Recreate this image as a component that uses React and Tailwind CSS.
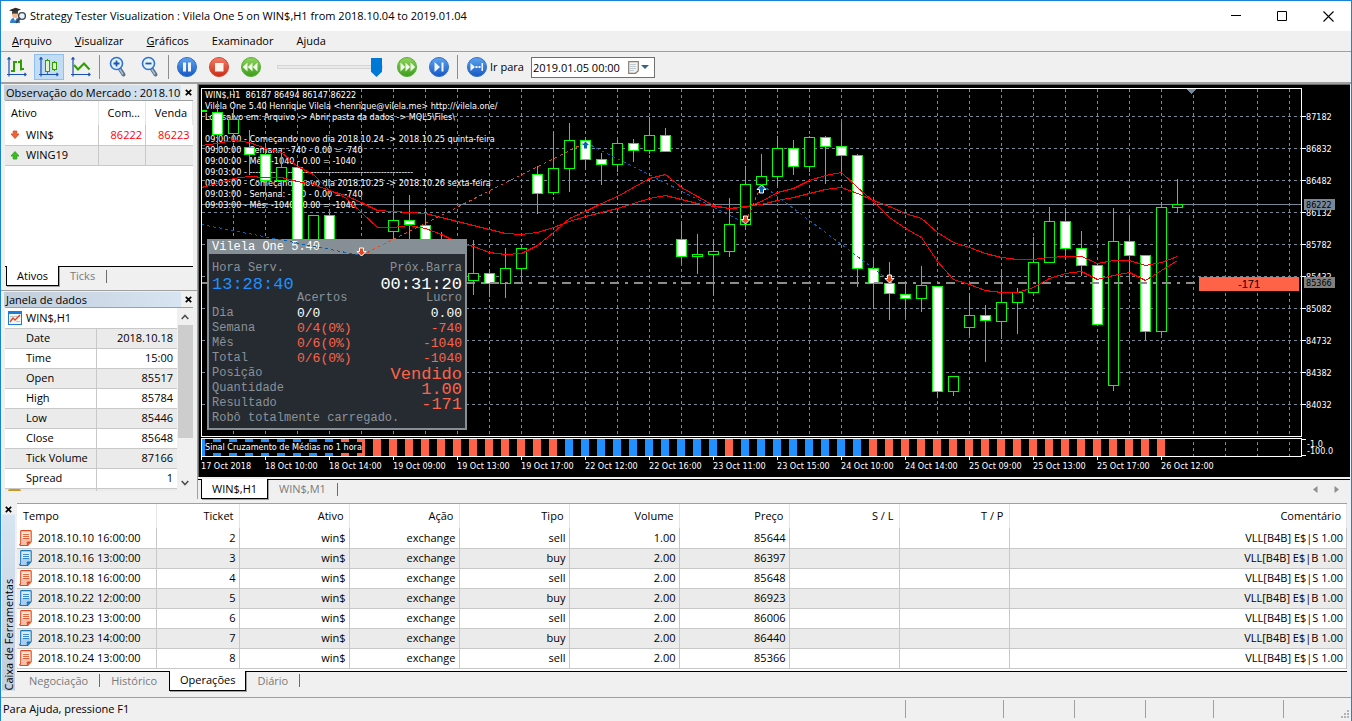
import React from "react";

/* ---------- chart data: x, high, open/close top, bottom, low, filled ---------- */
const CANDLES = [
  [217, 101, 112, 134, 152, 1], [233, 108, 119, 133, 139, 0], [249, 130, 147, 154, 174, 1],
  [265, 144, 154, 180, 194, 1], [281, 153, 167, 180, 193, 0], [297, 161, 167, 290, 295, 1],
  [313, 215, 215, 290, 295, 0], [329, 213, 215, 290, 295, 1], [393, 196, 220, 231, 250, 0],
  [409, 195, 220, 224, 250, 1], [425, 208, 225, 270, 275, 1], [441, 232, 270, 280, 285, 1],
  [473, 240, 273, 280, 294, 0], [489, 270, 273, 283, 296, 1], [505, 248, 268, 283, 297, 0],
  [521, 248, 248, 268, 282, 0], [537, 166, 174, 193, 213, 1], [553, 132, 168, 192, 194, 0],
  [569, 123, 140, 168, 191, 0], [585, 137, 140, 159, 169, 1], [601, 153, 159, 164, 184, 1],
  [617, 140, 143, 164, 171, 0], [633, 139, 143, 150, 161, 1], [649, 117, 135, 150, 153, 0],
  [665, 128, 135, 151, 151, 1], [681, 222, 239, 256, 263, 1], [697, 234, 254, 256, 273, 0],
  [713, 239, 251, 254, 295, 0], [729, 198, 224, 251, 256, 0], [745, 166, 184, 224, 229, 0],
  [761, 154, 176, 184, 186, 0], [777, 136, 148, 176, 185, 0], [793, 140, 148, 166, 174, 1],
  [809, 136, 137, 166, 171, 0], [825, 136, 137, 146, 183, 1], [841, 122, 146, 155, 172, 1],
  [857, 154, 155, 268, 286, 1], [873, 259, 268, 283, 308, 1], [889, 262, 283, 293, 319, 1],
  [905, 283, 294, 298, 316, 1], [921, 266, 285, 298, 311, 0], [937, 286, 286, 391, 397, 1],
  [953, 376, 376, 391, 395, 0], [969, 293, 315, 327, 334, 0], [985, 305, 315, 320, 361, 1],
  [1001, 270, 302, 321, 338, 0], [1017, 288, 292, 302, 333, 0], [1033, 237, 262, 292, 292, 0],
  [1049, 207, 221, 262, 262, 0], [1065, 208, 221, 248, 256, 1], [1081, 231, 248, 265, 275, 1],
  [1097, 263, 265, 324, 324, 1], [1113, 208, 241, 385, 390, 0], [1129, 218, 241, 255, 282, 1],
  [1145, 255, 255, 331, 339, 1], [1161, 202, 207, 331, 334, 0], [1177, 179, 204, 207, 212, 0],
];

const FAST = [
  145, 143, 140, 142, 148, 152, 166, 174, 190, 197, 212, 227, 227, 225, 228, 234, 242, 246, 252, 254,
  253, 245, 232, 218, 211, 203, 196, 187, 178, 174, 187, 196, 205, 208, 207, 201, 192, 188, 180, 175,
  172, 187, 201, 217, 228, 237, 261, 279, 284, 290, 292, 292, 287, 278, 273, 271, 279, 275, 272, 280,
  270, 260,
];
const SLOW = [
  187, 183, 178, 176, 177, 177, 181, 184, 190, 195, 202, 210, 211, 212, 213, 217, 221, 225, 229, 233,
  234, 232, 227, 221, 216, 212, 208, 203, 198, 195, 199, 203, 206, 208, 206, 204, 200, 197, 193, 189,
  187, 193, 200, 206, 213, 218, 232, 242, 247, 253, 257, 259, 259, 257, 256, 256, 263, 260, 260, 265,
  262, 256,
];
const toPoints = (ys) => ys.map((y, i) => `${201 + i * 16},${y}`).join(" ");

const GRID_X = Array.from({ length: 40 }, (_, i) => 233 + i * 32);
const PRICES = [87182, 86832, 86482, 86132, 85782, 85432, 85082, 84732, 84382, 84032];
const TIMES = [
  "17 Oct 2018", "18 Oct 10:00", "18 Oct 14:00", "19 Oct 09:00", "19 Oct 13:00", "19 Oct 17:00",
  "22 Oct 12:00", "22 Oct 16:00", "23 Oct 11:00", "23 Oct 15:00", "24 Oct 10:00", "24 Oct 14:00",
  "25 Oct 09:00", "25 Oct 13:00", "25 Oct 17:00", "26 Oct 12:00",
];
const LOG = [
  "WIN$,H1  86187 86494 86147 86222",
  "Vilela One 5.40 Henrique Vilela <henrique@vilela.me> http://vilela.one/",
  "Log salvo em: Arquivo -> Abrir pasta da dados -> MQL5\\Files\\",
  "",
  "09:00:00 - Começando novo dia 2018.10.24 -> 2018.10.25 quinta-feira",
  "09:00:00 - Semana: -740 - 0.00 = -740",
  "09:00:00 - Mês: -1040 - 0.00 = -1040",
  "09:03:00 - --------------------------------------------------------",
  "09:03:00 - Começando novo dia 2018.10.25 -> 2018.10.26 sexta-feira",
  "09:03:00 - Semana: -740 - 0.00 = -740",
  "09:03:00 - Mês: -1040 - 0.00 = -1040",
];

const OPERATIONS = [
  ["2018.10.10 16:00:00", 2, "sell", "1.00", 85644],
  ["2018.10.16 13:00:00", 3, "buy", "2.00", 86397],
  ["2018.10.18 16:00:00", 4, "sell", "2.00", 85648],
  ["2018.10.22 12:00:00", 5, "buy", "2.00", 86923],
  ["2018.10.23 13:00:00", 6, "sell", "2.00", 86006],
  ["2018.10.23 14:00:00", 7, "buy", "2.00", 86440],
  ["2018.10.24 13:00:00", 8, "sell", "2.00", 85366],
];
const DATA_WINDOW = [
  ["Date", "2018.10.18"], ["Time", "15:00"], ["Open", "85517"], ["High", "85784"], ["Low", "85446"],
  ["Close", "85648"], ["Tick Volume", "87166"], ["Spread", "1"],
];

/* ---------- icons ---------- */
function AppIcon() {
  return (
    <svg width="18" height="18" viewBox="0 0 18 18" aria-hidden="true">
      <path d="M1 16c0-3 2-5.500 5-5.500s5 2 5 5.500z" fill="#2f7fd0" />
      <path d="M4.500 10.800 6 14l2-3.200z" fill="#fff" />
      <ellipse cx="6" cy="7.600" rx="3" ry="3.400" fill="#f2b98a" />
      <path d="M3 7.500c0-1 .3-2 1-2.600h4c.6.600 1 1.600 1 2.600l-1-1.200H4z" fill="#6b4020" />
      <path d="M0 3.200 6.500.8 12 2.600 6 5.200z" fill="#2b2b2b" />
      <path d="M3 4.200v1.700c1.800.9 4.400.8 6 0V4z" fill="#3c3c3c" />
      <circle cx="13" cy="9" r="3.400" fill="#e8f3fb" stroke="#3d4650" strokeWidth="1.400" />
      <path d="m10.600 11.500-3 3.600" stroke="#3d4650" strokeWidth="2.200" strokeLinecap="round" />
    </svg>
  );
}

function Axes() {
  return (
    <path d="M2 .5v19M0 17.500h19M.5 2.500 2 .5l1.500 2M17.500 16l1.500 1.500-1.500 1.500" fill="none" stroke="#1a4fb4" strokeWidth="1.200" />
  );
}
function BarsIcon() {
  return (
    <svg width="20" height="20" viewBox="0 0 20 20" aria-hidden="true">
      <Axes />
      <path d="M7 4v11M4 14h3M7 5h3M14 2.500v11M11 5h3M14 12h3" fill="none" stroke="#2e9e00" strokeWidth="2" />
    </svg>
  );
}
function CandlesIcon() {
  return (
    <svg width="20" height="20" viewBox="0 0 20 20" aria-hidden="true">
      <Axes />
      <path d="M8.500 2v2M8.500 15v2M15.500 4v2M15.500 12v2" stroke="#2e9e00" />
      <rect x="6.500" y="3.500" width="4" height="11" fill="#e3f5c8" stroke="#2e9e00" />
      <rect x="13.500" y="5.500" width="4" height="7" fill="#e3f5c8" stroke="#2e9e00" />
    </svg>
  );
}
function LineIcon() {
  return (
    <svg width="20" height="20" viewBox="0 0 20 20" aria-hidden="true">
      <Axes />
      <path d="m3 8 4 4.500 6-6 5.500 6" fill="none" stroke="#2e9e00" strokeWidth="2" />
    </svg>
  );
}
function Magnifier({ plus }) {
  return (
    <svg width="20" height="22" viewBox="0 0 20 22" aria-hidden="true">
      <path d="m11.500 12.500 4 6" stroke="#5c6f86" strokeWidth="4" strokeLinecap="round" />
      <path d="m11.800 13.500 3 4.500" stroke="#a9bfd6" strokeWidth="1.500" strokeLinecap="round" />
      <circle cx="8.500" cy="7.500" r="6" fill="#e6f3fd" stroke="#2f74cf" strokeWidth="1.600" />
      <path d={plus ? "M5.500 7.500h6M8.500 4.500v6" : "M5.500 7.500h6"} stroke="#1b56b5" strokeWidth="1.800" />
    </svg>
  );
}
function Orb({ from, to, edge, id, children }) {
  return (
    <svg width="20" height="20" viewBox="0 0 20 20" aria-hidden="true">
      <defs>
        <linearGradient id={id} x1="0" y1="0" x2="0" y2="1">
          <stop offset="0" stopColor={from} />
          <stop offset="1" stopColor={to} />
        </linearGradient>
      </defs>
      <circle cx="10" cy="10" r="9.500" fill={`url(#${id})`} stroke={edge} />
      {children}
    </svg>
  );
}
const BLUE = { from: "#5fa3ee", to: "#1558c4", edge: "#2f6fcb" };
const RED = { from: "#f0806a", to: "#cc2a14", edge: "#d4442e" };
const GREEN = { from: "#8fd45c", to: "#3c9d1c", edge: "#58ae34" };

function WindowGlyph() {
  return (
    <svg width="14" height="14" viewBox="0 0 14 14" aria-hidden="true">
      <rect x=".5" y=".5" width="13" height="13" fill="#f4f4f4" stroke="#1c7cd6" />
      <path d="M0 0h14v3H0z" fill="#1c7cd6" />
      <path d="M2 5.500h10M2 8h2M8 10.500h4" stroke="#c4c4c4" />
      <path d="m2 11 3-4 2 2 5-5" fill="none" stroke="#e2401b" strokeWidth="1.300" />
    </svg>
  );
}
function NoteIcon({ side }) {
  const c = side === "sell" ? ["#e04a1c", "#fde3d8", "#f8bfa9"] : ["#1874b8", "#dcebf9", "#aacdf0"];
  return (
    <svg width="13" height="16" viewBox="0 0 13 16" aria-hidden="true">
      <path d="M2.500.6h8.900q.8 0 .8.800v10.200l-3.400 3.800H1.500q-.8 0-.8-.8l1-1V1.400q0-.8.800-.8z" fill={c[1]} stroke={c[0]} strokeWidth="1.100" />
      <path d="M2.300 8h9.300v3.500L8.500 15H2.300z" fill={c[2]} />
      <path d="M4 4.500h6M4 6.500h6M4 8.500h6" stroke={c[0]} strokeWidth=".8" />
      <path d="M7.800 15.400v-3.200q0-.8.800-.8h3.600z" fill={c[0]} />
    </svg>
  );
}
function Arrow({ up }) {
  return (
    <svg width="10" height="9" viewBox="0 0 10 9" aria-hidden="true">
      {up ? (
        <path d="M5 .5 9 5H6.800v3H3.200V5H1z" fill="#35c21c" stroke="#2a9a18" strokeWidth=".8" />
      ) : (
        <path d="M5 8.500 9 4H6.800V1H3.200v3H1z" fill="#f0643c" stroke="#d9431c" strokeWidth=".8" />
      )}
    </svg>
  );
}
function CloseX() {
  return (
    <svg width="7" height="7" viewBox="0 0 7 7" aria-hidden="true">
      <path d="m.8.800 5.400 5.400M6.200.8.800 6.200" stroke="#000" strokeWidth="1.700" />
    </svg>
  );
}

/* ---------- shared pieces ---------- */
function Tabs({ tabs, active, className = "" }) {
  return (
    <div role="tablist" className={`flex h-5 items-start border-t border-black ${className}`}>
      {tabs.map((t, i) => {
        const on = t === active;
        const divider = !on && tabs[i + 1] !== active;
        return on ? (
          <button key={t} role="tab" aria-selected="true" className="-mt-px h-5 border-x border-b border-black bg-white px-[10px] text-black shadow-[1px_1px_0_#a0a0a0]">
            {t}
          </button>
        ) : (
          <button key={t} role="tab" aria-selected="false" className="flex h-[18px] items-center pl-[11px] text-[#7a7a7a]">
            {t}
            <span className={`ml-[11px] h-[13px] w-px ${divider ? "bg-[#6d6d6d]" : ""}`} />
          </button>
        );
      })}
    </div>
  );
}

function PaneHeader({ children }) {
  return (
    <div className="flex h-[15px] items-center">
      <h2 className="flex-1 overflow-hidden bg-gradient-to-r from-[#c1cddb] to-[#d7e4f2] pl-[2px] leading-[15px] whitespace-nowrap">{children}</h2>
      <button aria-label="Fechar painel" className="flex h-[15px] w-[15px] items-center justify-center">
        <CloseX />
      </button>
    </div>
  );
}

function ToolButton({ label, pressed, children }) {
  return (
    <button
      aria-label={label}
      className={`mx-px flex h-[26px] w-[30px] items-center justify-center border ${pressed ? "border-[#8ebfee] bg-[#c3dcf5]" : "border-transparent"}`}
    >
      {children}
    </button>
  );
}
const ToolDivider = () => <span className="mx-[2px] h-6 w-px bg-[#8d8d8d]" />;

/* ---------- sections ---------- */
function TitleBar() {
  return (
    <header className="flex h-[30px] items-center bg-white pl-2">
      <AppIcon />
      <h1 className="ml-[3px] flex-1">Strategy Tester Visualization : Vilela One 5 on WIN$,H1 from 2018.10.04 to 2019.01.04</h1>
      <button aria-label="Minimizar" className="flex h-full w-[46px] items-center justify-center">
        <svg width="10" height="10"><path d="M0 4.500h10" stroke="#000" /></svg>
      </button>
      <button aria-label="Maximizar" className="flex h-full w-[46px] items-center justify-center">
        <svg width="10" height="10"><path d="M.5.500h9v9h-9z" fill="none" stroke="#000" /></svg>
      </button>
      <button aria-label="Fechar" className="flex h-full w-[46px] items-center justify-center">
        <svg width="11" height="11"><path d="m.5.500 10 10M10.500.5l-10 10" stroke="#000" strokeWidth="1.100" /></svg>
      </button>
    </header>
  );
}

function MenuBar() {
  return (
    <nav className="flex h-5 items-center gap-[23px] pl-[11px]">
      <button><u>A</u>rquivo</button>
      <button><u>V</u>isualizar</button>
      <button><u>G</u>ráficos</button>
      <button>Examinador</button>
      <button>Ajuda</button>
    </nav>
  );
}

function Toolbar() {
  return (
    <div className="flex h-[33px] items-center border-t border-[#a0a0a0] border-b-2 border-b-[#a0a0a0]">
      <ToolButton label="Barras"><BarsIcon /></ToolButton>
      <ToolButton label="Candles" pressed><CandlesIcon /></ToolButton>
      <ToolButton label="Linha"><LineIcon /></ToolButton>
      <ToolDivider />
      <ToolButton label="Aumentar zoom"><Magnifier plus /></ToolButton>
      <ToolButton label="Diminuir zoom"><Magnifier /></ToolButton>
      <ToolDivider />
      <ToolButton label="Pausar">
        <Orb id="orbPause" {...BLUE}><path d="M6 5.500h3v9H6zM11 5.500h3v9h-3z" fill="#f1f6fd" /></Orb>
      </ToolButton>
      <ToolButton label="Parar">
        <Orb id="orbStop" {...RED}><path d="M6 6h8.500v8.500H6z" fill="#fff3ee" /></Orb>
      </ToolButton>
      <ToolButton label="Mais devagar">
        <Orb id="orbSlow" {...GREEN}><path d="M6.500 5.500v9L1.800 10zM11.500 5.500v9L6.800 10zM16.500 5.500v9L11.800 10z" fill="#effae8" /></Orb>
      </ToolButton>
      <input
        type="range"
        aria-label="Velocidade"
        min="0"
        max="100"
        defaultValue="100"
        className="mr-2 ml-[10px] h-5 w-[106px] appearance-none bg-transparent [&::-webkit-slider-runnable-track]:h-1 [&::-webkit-slider-runnable-track]:border [&::-webkit-slider-runnable-track]:border-[#d6d6d6] [&::-webkit-slider-runnable-track]:bg-[#e7eaea] [&::-webkit-slider-thumb]:-mt-2 [&::-webkit-slider-thumb]:h-[19px] [&::-webkit-slider-thumb]:w-[11px] [&::-webkit-slider-thumb]:appearance-none [&::-webkit-slider-thumb]:bg-[#0078d7] [&::-webkit-slider-thumb]:[clip-path:polygon(0_0,100%_0,100%_72%,50%_100%,0_72%)]"
      />
      <ToolButton label="Mais rápido">
        <Orb id="orbFast" {...GREEN}><path d="M3.500 5.500v9L8.200 10zM8.500 5.500v9l4.700-4.500zM13.500 5.500v9l4.700-4.500z" fill="#effae8" /></Orb>
      </ToolButton>
      <ToolButton label="Próximo passo">
        <Orb id="orbNext" {...BLUE}><path d="M5.500 5v10l5.500-5zM12.500 5.500h2v9h-2z" fill="#f1f6fd" /></Orb>
      </ToolButton>
      <ToolDivider />
      <button className="flex items-center gap-[3px] pl-[7px]">
        <Orb id="orbGoto" {...BLUE}>
          <path d="M3.500 6v8l4.500-4zM8.500 9h2v2h-2zM11.500 9h2v2h-2zM14.500 6H16v8h-1.500z" fill="#f1f6fd" />
        </Orb>
        Ir para
      </button>
      <div className="ml-[7px] flex h-[21px] w-[124px] items-center border border-[#6f6f6f] bg-white">
        <input aria-label="Data e hora" defaultValue="2019.01.05 00:00" className="h-full min-w-0 flex-1 pl-px outline-none" />
        <button aria-label="Abrir calendário" className="flex items-center gap-[2px] pr-[5px]">
          <svg width="11" height="13" viewBox="0 0 11 13">
            <path d="M.7.700h9.600v9L7.500 12.300H.7z" fill="#f4f4f0" stroke="#8b7d76" strokeWidth="1.200" />
            <path d="M2.500 3.500h6M2.500 5.500h6M2.500 7.500h6M2.500 9.500h4" stroke="#8fa3b8" strokeDasharray="1 1" />
          </svg>
          <svg width="8" height="4"><path d="M0 0h8L4 4z" fill="#3a6186" /></svg>
        </button>
      </div>
    </div>
  );
}

function MarketWatch() {
  return (
    <section className="flex flex-1 flex-col pr-px pl-[3px]">
      <PaneHeader>Observação do Mercado : 2018.10.24</PaneHeader>
      <div className="mr-[3px] ml-px min-h-[160px] flex-1 border-t border-[#a0a0a0] bg-white">
        <table className="w-full table-fixed border-collapse">
          <thead>
            <tr className="h-6">
              <th className="border-r border-[#e5e5e5] pl-[6px] text-left font-normal">Ativo</th>
              <th className="w-[47px] border-r border-[#e5e5e5] pr-[5px] text-right font-normal">Com...</th>
              <th className="w-[47px] border-r border-[#e5e5e5] pr-[5px] text-right font-normal">Venda</th>
            </tr>
          </thead>
          <tbody>
            <tr className="h-5 border-b border-[#c8c8c8]">
              <td className="border-r border-[#c8c8c8] pl-[5px]"><span className="flex items-center gap-[6px]"><Arrow />WIN$</span></td>
              <td className="border-r border-[#c8c8c8] pr-[3px] text-right text-[#ff0000]">86222</td>
              <td className="pr-[3px] text-right text-[#ff0000]">86223</td>
            </tr>
            <tr className="h-5 border-b border-[#c8c8c8] bg-[#ebebeb]">
              <td className="border-r border-[#c8c8c8] pl-[5px]"><span className="flex items-center gap-[6px]"><Arrow up />WING19</span></td>
              <td className="border-r border-[#c8c8c8]" />
              <td />
            </tr>
          </tbody>
        </table>
      </div>
      <Tabs tabs={["Ativos", "Ticks"]} active="Ativos" className="mr-[3px] ml-px pl-px" />
    </section>
  );
}

function DataWindow() {
  return (
    <section className="mt-1 border-t border-[#a0a0a0] pt-px pr-px pb-2 pl-[3px]">
      <PaneHeader>Janela de dados</PaneHeader>
      <div className="mr-[3px] ml-px flex h-[184px] overflow-hidden border-t border-[#a0a0a0] bg-white">
        <table className="h-[200px] flex-1 border-collapse">
          <tbody>
            <tr className="h-5 border-b border-[#c8c8c8]">
              <th colSpan="2" className="pl-[3px] text-left font-normal">
                <span className="flex items-center gap-1"><WindowGlyph />WIN$,H1</span>
              </th>
            </tr>
            {DATA_WINDOW.map(([k, v], i) => (
              <tr key={k} className={`h-5 border-b border-[#c8c8c8] ${i % 2 ? "" : "bg-[#ebebeb]"}`}>
                <th className="w-[91px] border-r border-[#c8c8c8] pl-[21px] text-left font-normal whitespace-nowrap">{k}</th>
                <td className="pr-1 text-right">{v}</td>
              </tr>
            ))}
            <tr className="h-5 bg-[#ebebeb]">
              <th className="border-r border-[#c8c8c8] pl-[3px] align-top">
                <span className="block h-3 w-[13px] rounded-[2px] border-2 border-[#c99a1c] bg-[#ffd84d]" />
              </th>
              <td />
            </tr>
          </tbody>
        </table>
        <div className="flex w-4 flex-col items-center bg-[#f0f0f0]">
          <button aria-label="Rolar para cima" className="flex h-[17px] w-full items-center justify-center">
            <svg width="8" height="6"><path d="m.7 5 3.300-3.500L7.300 5" fill="none" stroke="#505050" strokeWidth="1.600" /></svg>
          </button>
          <span className="h-[113px] w-[15px] bg-[#cdcdcd]" />
          <button aria-label="Rolar para baixo" className="mt-auto flex h-[17px] w-full items-center justify-center">
            <svg width="8" height="6"><path d="M.7 1 4 4.500 7.300 1" fill="none" stroke="#505050" strokeWidth="1.600" /></svg>
          </button>
        </div>
      </div>
    </section>
  );
}

function Marker({ x, y, up }) {
  const d = up ? "M0-4.500 4.500 0H2v3.500h-4V0h-2.500z" : "M0 4.500 4.500 0H2v-3.500h-4V0h-2.500z";
  return <path transform={`translate(${x} ${y})`} d={d} fill={up ? "#0062b4" : "#e5441c"} stroke="#fff" strokeWidth="1" />;
}

function RobotPanel() {
  const stats = [
    ["Dia", "0/0", "0.00", "text-white"],
    ["Semana", "0/4(0%)", "-740", "text-[#ff6347]"],
    ["Mês", "0/6(0%)", "-1040", "text-[#ff6347]"],
    ["Total", "0/6(0%)", "-1040", "text-[#ff6347]"],
  ];
  const totals = [["Posição", "Vendido"], ["Quantidade", "1.00"], ["Resultado", "-171"]];
  return (
    <section className="absolute top-[150px] left-[5px] w-[260px] border-2 border-[#878f96] bg-[#262b32] font-['Liberation_Mono',monospace] text-[12px] leading-[15px] text-[#8a9299]">
      <h3 className="h-[13px] bg-[#878f96] pl-[3px] leading-[13px] text-white">Vilela One 5.40</h3>
      <div className="px-[3px] pt-[7px] pb-[2px]">
        <div className="flex h-[15px] justify-between"><span>Hora Serv.</span><span>Próx.Barra</span></div>
        <div className="flex h-[15px] justify-between text-[17px] leading-[18px]"><span className="text-[#1e90ff]">13:28:40</span><span className="text-white">00:31:20</span></div>
        <div className="grid h-[15px] grid-cols-[85px_1fr_auto]"><span /><span>Acertos</span><span>Lucro</span></div>
        {stats.map(([k, hits, profit, color]) => (
          <div key={k} className="grid h-[15px] grid-cols-[85px_1fr_auto]">
            <span>{k}</span>
            <span className={`text-[13px] ${color}`}>{hits}</span>
            <span className={`text-[13px] ${color}`}>{profit}</span>
          </div>
        ))}
        {totals.map(([k, v]) => (
          <div key={k} className="flex h-[15px] justify-between"><span>{k}</span><span className="text-[17px] leading-[18px] text-[#ff6347]">{v}</span></div>
        ))}
        <p className="h-[15px]">Robô totalmente carregado.</p>
      </div>
    </section>
  );
}

function PricePlot() {
  return (
    <div className="relative min-w-0 flex-1 overflow-hidden border border-white">
      <svg className="absolute inset-0 h-full w-full" shapeRendering="crispEdges" aria-hidden="true">
        <g transform="translate(-201.500 -88.500)" stroke="#778899">
          {GRID_X.map((x) => <path key={x} d={`M${x} 88.500V700`} strokeDasharray="3 3" />)}
          {PRICES.map((p, i) => <path key={p} d={`M201.500 ${116 + i * 32}H2000`} strokeDasharray="3 3" />)}
          <path d="M201.500 204H2000" />
          <path d="M1186.500 88.500h9l-4.500 5z" fill="#778899" stroke="none" />
        </g>
      </svg>
      <div className="absolute top-px left-[3px] font-['DejaVu_Sans_Condensed','DejaVu_Sans',sans-serif] text-[9px] leading-[11px] whitespace-pre text-white">
        {LOG.map((line, i) => <p key={i} className="h-[11px]">{line}</p>)}
      </div>
      <svg className="absolute inset-0 h-full w-full" shapeRendering="crispEdges" role="img" aria-label="Gráfico de candles WIN$ H1">
        <g transform="translate(-201.500 -88.500)" fill="none">
          <g stroke="#00ff00">
            <path d="M201 110h5" strokeWidth="2" />
            {CANDLES.map(([x, high, top, bottom, low, filled]) => (
              <g key={x}>
                <path d={`M${x} ${high - 0.5}V${top}M${x} ${bottom}V${low + 0.5}`} />
                <rect x={x - 5} y={top} width="10" height={bottom - top} fill={filled ? "#fff" : "#000"} />
              </g>
            ))}
          </g>
          <path d="M201.500 283H1195" stroke="#32cd32" strokeDasharray="9 6 3 6" />
          <path d="M201.500 282H1195" stroke="#8c8c8c" strokeDasharray="9 6 3 6" />
          <polyline points={toPoints(FAST)} stroke="#f00" />
          <polyline points={toPoints(SLOW)} stroke="#f00" />
        </g>
      </svg>
      <RobotPanel />
      <svg className="pointer-events-none absolute inset-0 h-full w-full" aria-hidden="true">
        <g transform="translate(-201.500 -88.500)" fill="none">
          <g shapeRendering="crispEdges" strokeDasharray="3 3">
            <path d="m201 224 160 31M585 142l160 81M761 184l128 96" stroke="#0062b4" />
            <path d="m361 255 224-113M745 222l16-38" stroke="#e5441c" />
          </g>
          <Marker x={361} y={251} />
          <Marker x={585} y={145} up />
          <Marker x={745} y={219} />
          <Marker x={761} y={189} up />
          <Marker x={889} y={278} />
        </g>
      </svg>
      <div className="absolute top-[188px] right-[2px] h-[14px] w-[100px] bg-[#ff6347] text-center font-['Liberation_Sans',sans-serif] text-[11px] leading-[14px] text-black">-171</div>
    </div>
  );
}

function PriceAxis() {
  return (
    <svg className="w-[48px] shrink-0" height="349" fill="#fff">
      {PRICES.map((p, i) => (
        <g key={p}>
          <path d={`M0 ${28.500 + i * 32}h4`} stroke="#fff" />
          <text x="4" y={32 + i * 32}>{p}</text>
        </g>
      ))}
      <rect x="2" y="111" width="31" height="11" fill="#778899" />
      <text x="4" y="120" fill="#000">86222</text>
      <rect x="2" y="189" width="31" height="11" fill="#808080" />
      <text x="4" y="198" fill="#000">85366</text>
    </svg>
  );
}

function barColor(x) {
  if (x < 340) return "#1e90ff";
  if (x < 560) return "#ff6347";
  if (x < 865 && x !== 729) return "#1e90ff";
  return "#ff6347";
}
const SIGNAL_X = Array.from({ length: 61 }, (_, i) => 201 + i * 16);

function Chart() {
  return (
    <div className="flex flex-1 flex-col border-t border-l border-[#696969] bg-black pt-[3px] pl-[2px] font-['DejaVu_Sans_Condensed','DejaVu_Sans',sans-serif] text-[9px]">
      <div className="flex min-h-[349px] flex-1">
        <PricePlot />
        <PriceAxis />
      </div>
      <div className="mt-px flex h-[19px]">
        <div className="relative min-w-0 flex-1 overflow-hidden border border-white">
          <svg className="absolute inset-0 h-full w-full" shapeRendering="crispEdges" role="img" aria-label="Sinal">
            <g transform="translate(-202 0)">
              {GRID_X.filter((x) => x > 1170).map((x) => <path key={x} d={`M${x + 0.5} 3V17`} stroke="#778899" strokeDasharray="3 3" />)}
              {SIGNAL_X.map((x) => <rect key={x} x={x - 4} y="0" width="8" height="17" fill={barColor(x)} />)}
            </g>
          </svg>
          <p className="absolute top-[3px] left-[3px] bg-black leading-[11px] text-white">Sinal Cruzamento de Médias no 1 hora</p>
        </div>
        <svg className="w-[48px] shrink-0" height="19" fill="#fff">
          <path d="M0 1.500h4M0 17.500h4" stroke="#fff" />
          <text x="5" y="9">-1.0</text>
          <text x="5" y="16">-100.0</text>
        </svg>
      </div>
      <div className="flex h-5 overflow-hidden pt-1 text-white">
        {TIMES.map((t) => (
          <span key={t} className="relative w-16 shrink-0 leading-[11px] whitespace-nowrap before:absolute before:-top-1 before:left-0 before:h-[3px] before:w-px before:bg-white">{t}</span>
        ))}
      </div>
    </div>
  );
}

function Toolbox() {
  const cols = ["Tempo", "Ticket", "Ativo", "Ação", "Tipo", "Volume", "Preço", "S / L", "T / P", "Comentário"];
  const widths = ["w-[139px]", "w-[83px]", "w-[110px]", "w-[110px]", "w-[110px]", "w-[110px]", "w-[110px]", "w-[110px]", "w-[110px]", ""];
  return (
    <section className="mt-1 flex pr-1 pb-[6px]">
      <div className="flex w-[14px] flex-col items-center">
        <button aria-label="Fechar caixa de ferramentas" className="flex h-3 w-full items-center justify-center"><CloseX /></button>
        <h2 className="flex w-[13px] flex-1 rotate-180 items-center bg-gradient-to-b from-[#c1cddb] to-[#d7e4f2] leading-[13px] [writing-mode:vertical-rl]">Caixa de Ferramentas</h2>
      </div>
      <div className="ml-[2px] min-w-0 flex-1 border-t border-[#a0a0a0] bg-white">
        <table className="w-full table-fixed border-collapse">
          <thead>
            <tr className="h-6">
              {cols.map((c, i) => (
                <th key={c} className={`border-r border-[#e5e5e5] font-normal ${widths[i]} ${i === 0 ? "pl-[6px] text-left" : "pr-[5px] text-right"}`}>{c}</th>
              ))}
            </tr>
          </thead>
          <tbody>
            {OPERATIONS.map(([time, ticket, side, volume, price], i) => (
              <tr key={ticket} className={`h-5 border-b border-[#c8c8c8] [&>td]:border-r [&>td]:border-[#c8c8c8] [&>td]:pr-[3px] [&>td]:text-right ${i % 2 ? "bg-[#ebebeb]" : ""}`}>
                <td><span className="flex items-center gap-[6px] pl-[2px]"><NoteIcon side={side} />{time}</span></td>
                <td>{ticket}</td>
                <td>win$</td>
                <td>exchange</td>
                <td>{side}</td>
                <td>{volume}</td>
                <td>{price}</td>
                <td />
                <td />
                <td>{`VLL[B4B] E$|${side === "sell" ? "S" : "B"} 1.00`}</td>
              </tr>
            ))}
          </tbody>
        </table>
        <Tabs tabs={["Negociação", "Histórico", "Operações", "Diário"]} active="Operações" className="mt-[2px] bg-[#f0f0f0] pl-px" />
      </div>
    </section>
  );
}

function StatusBar() {
  return (
    <footer className="flex h-6 items-center border-t border-[#a0a0a0] pl-[2px]">
      <span className="flex-1">Para Ajuda, pressione F1</span>
      {["w-[98px]", "w-[71px]", "w-[71px]", "w-[68px]", "w-[70px]", "w-[56px]"].map((w, i) => (
        <span key={i} className={`h-[18px] border-l border-[#a0a0a0] ${w}`} />
      ))}
      <svg width="12" height="12" className="self-end" fill="#b4b4b4">
        <path d="M8 1h2v2H8zM5 4h2v2H5zM8 4h2v2H8zM2 7h2v2H2zM5 7h2v2H5zM8 7h2v2H8z" />
      </svg>
    </footer>
  );
}

export default function App() {
  return (
    <div className="flex min-h-screen flex-col border border-[#1883d7] bg-[#f0f0f0] font-['Open_Sans','Noto_Sans',sans-serif] text-[11px] leading-4 text-black">
      <TitleBar />
      <MenuBar />
      <Toolbar />
      <div className="flex flex-1">
        <aside className="flex w-[197px] shrink-0 flex-col border-r border-[#a0a0a0] pt-px">
          <MarketWatch />
          <DataWindow />
        </aside>
        <main className="flex min-w-0 flex-1 flex-col pr-px">
          <Chart />
          <div className="mt-[2px] flex border-t border-black">
            <Tabs tabs={["WIN$,H1", "WIN$,M1"]} active="WIN$,H1" className="-mt-px flex-1 pl-[3px]" />
            <div className="flex items-center gap-4 pr-[11px]">
              <button aria-label="Aba anterior"><svg width="5" height="7"><path d="M4.500 0v7L0 3.500z" fill="#8f8f8f" /></svg></button>
              <button aria-label="Próxima aba"><svg width="5" height="7"><path d="M.5 0v7L5 3.500z" fill="#8f8f8f" /></svg></button>
            </div>
          </div>
        </main>
      </div>
      <Toolbox />
      <StatusBar />
    </div>
  );
}
